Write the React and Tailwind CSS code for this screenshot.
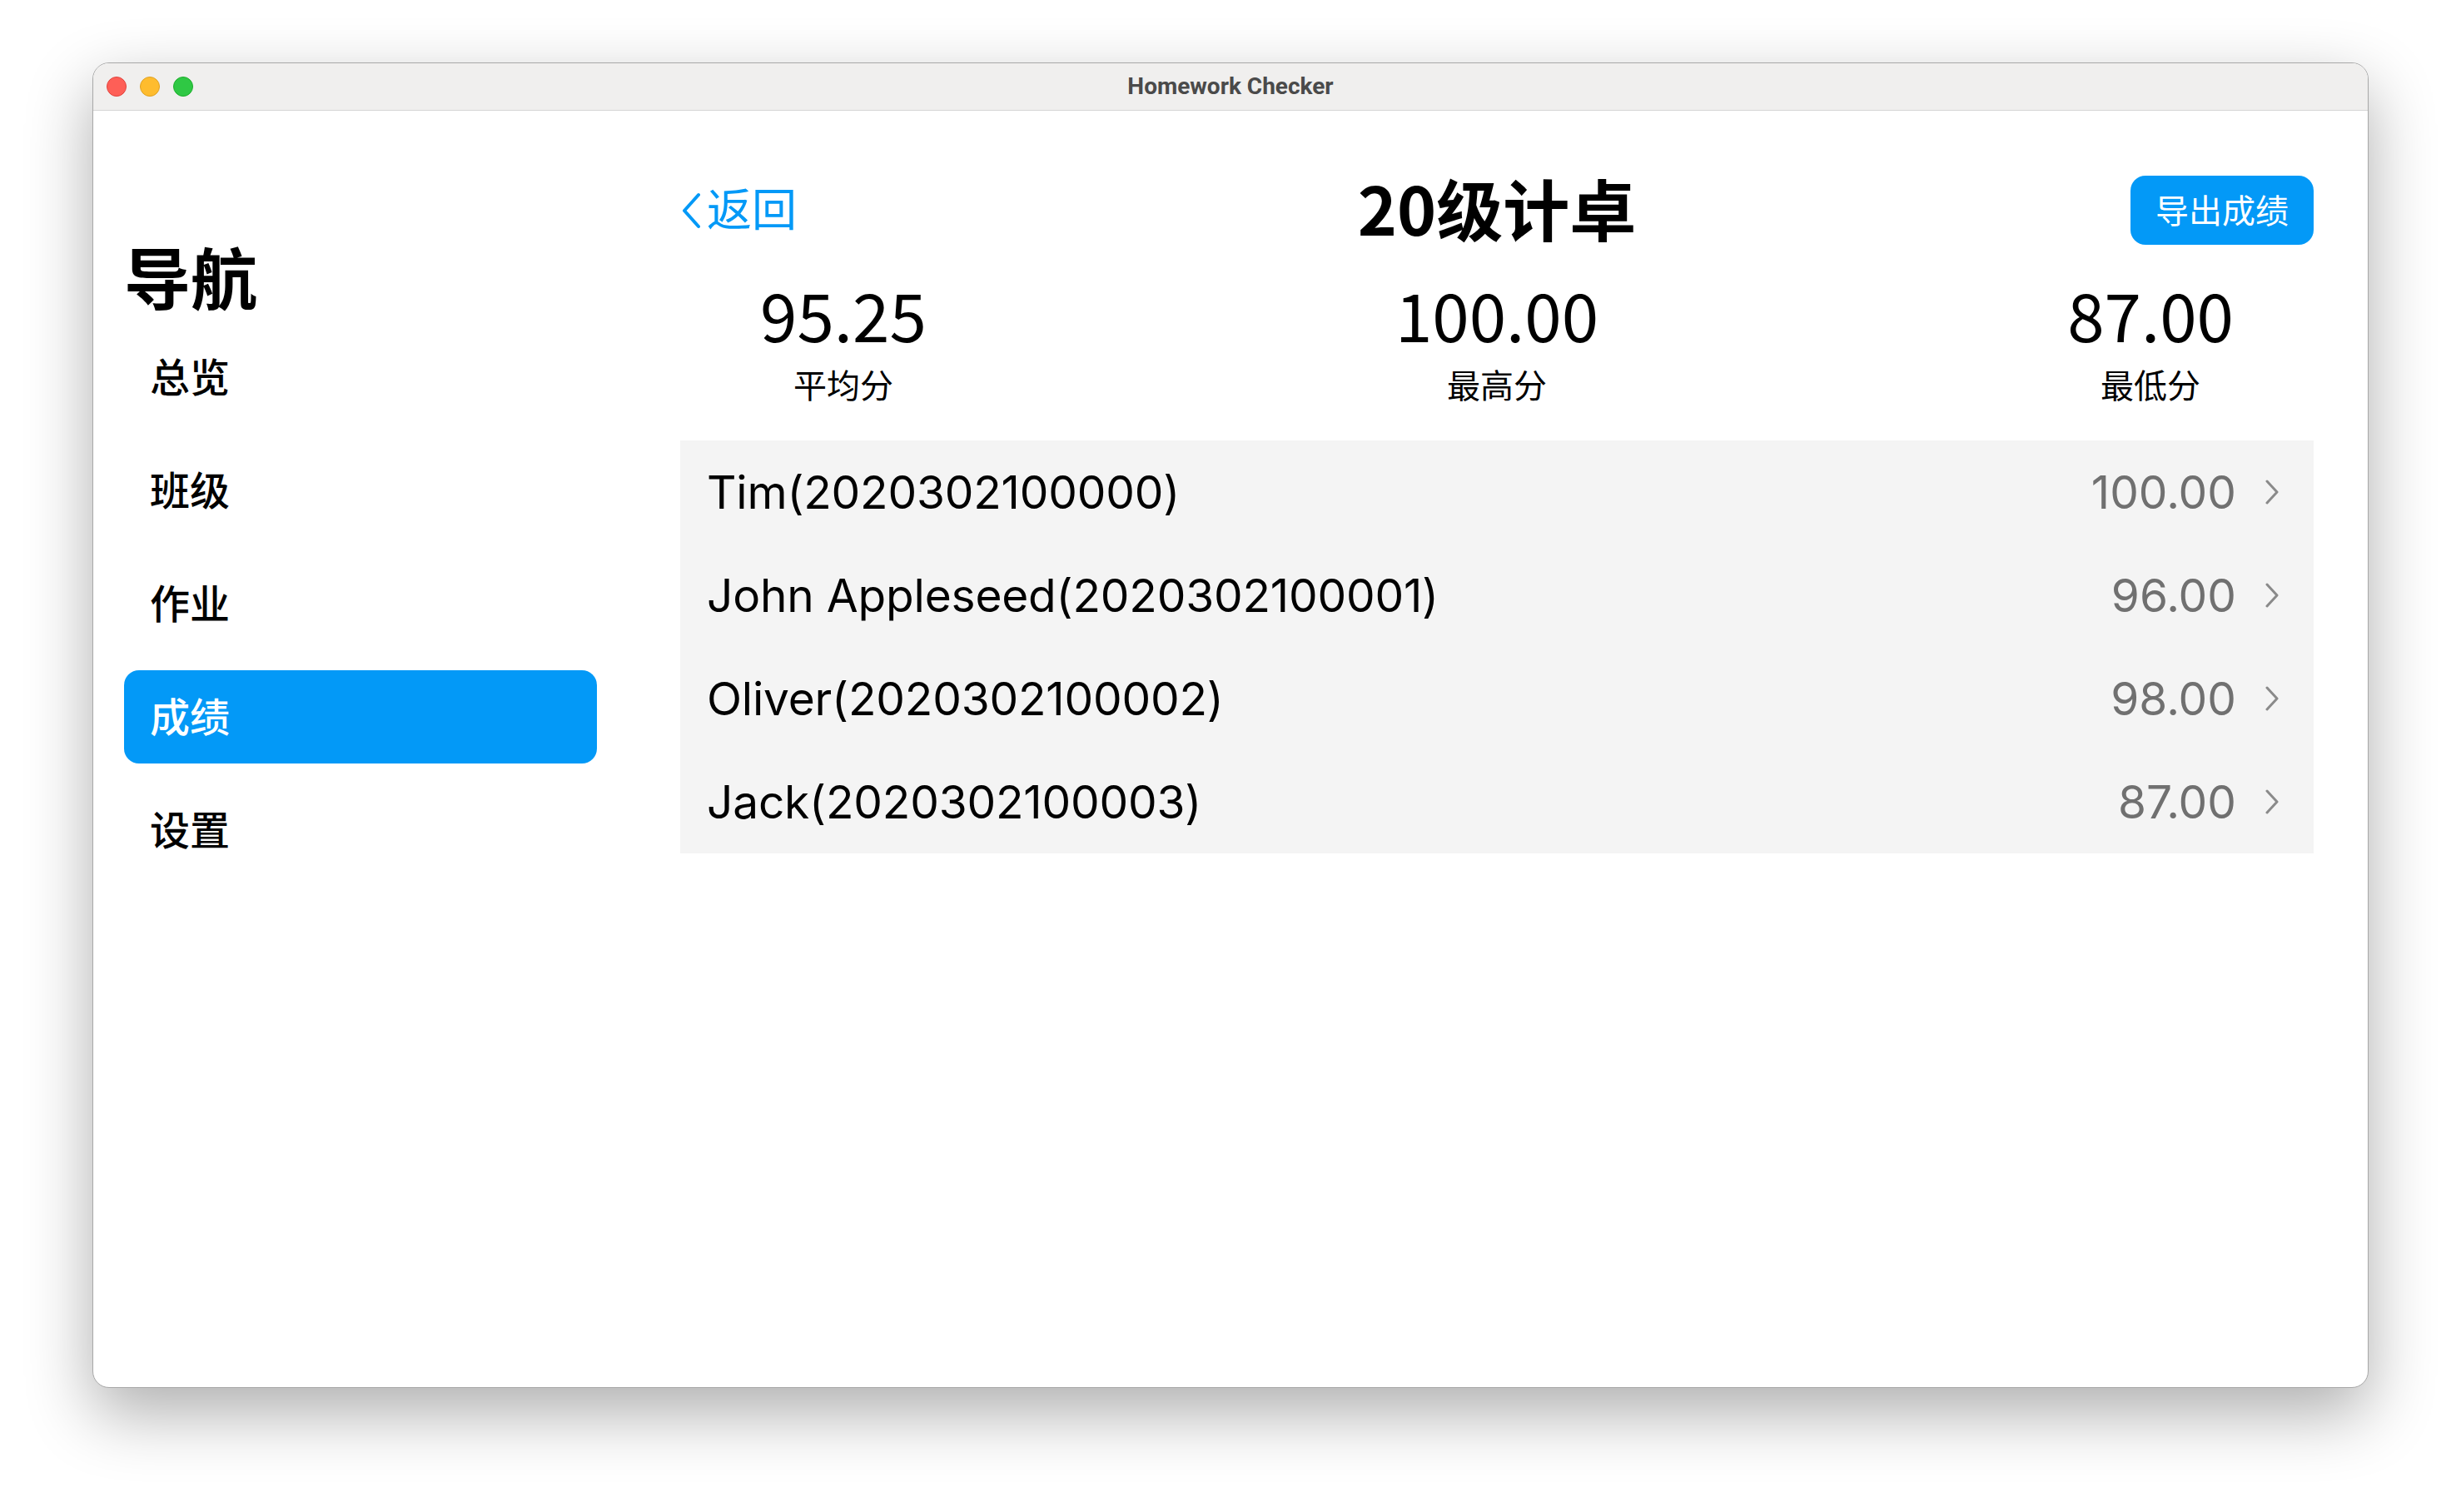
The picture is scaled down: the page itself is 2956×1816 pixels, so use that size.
const students = [
  { name: "Tim", id: "2020302100000", score: "100.00" },
  { name: "John Appleseed", id: "2020302100001", score: "96.00" },
  { name: "Oliver", id: "2020302100002", score: "98.00" },
  { name: "Jack", id: "2020302100003", score: "87.00" },
];

const stats = [
  { value: "95.25", label: "平均分" },
  { value: "100.00", label: "最高分" },
  { value: "87.00", label: "最低分" },
];

const navItems = ["总览", "班级", "作业", "成绩", "设置"];

const cjk = { fontFamily: '"Noto Sans CJK SC", "Noto Sans", sans-serif' };
const latin = { fontFamily: 'Inter, "Noto Sans CJK SC", sans-serif' };

function Chevron() {
  return (
    <svg width="18" height="30" viewBox="0 0 18 30" fill="none">
      <path
        d="M3 2l12 13-12 13"
        stroke="#8a8a8a"
        strokeWidth="3"
        strokeLinecap="round"
        strokeLinejoin="round"
      />
    </svg>
  );
}

function App() {
  return (
    <div className="w-[2956px] h-[1816px] bg-white pt-[75px] pl-[111px]">
      <div className="w-[2734px] h-[1592px] rounded-[20px] overflow-hidden bg-white border border-[#a8a8a8] shadow-[0_30px_80px_rgba(0,0,0,0.32)] flex flex-col">
        <div className="relative h-[57px] shrink-0 bg-[#f0efee] border-b border-[#d5d5d5] flex items-center pl-[16px]">
          <div className="flex gap-[16px]">
            <div className="w-[24px] h-[24px] rounded-full bg-[#fe5f57] border border-[#e0443e]"></div>
            <div className="w-[24px] h-[24px] rounded-full bg-[#febc2e] border border-[#dea123]"></div>
            <div className="w-[24px] h-[24px] rounded-full bg-[#2fc844] border border-[#1dad2b]"></div>
          </div>
          <div
            className="absolute inset-0 flex items-center justify-center text-[28px] font-bold text-[#4a4a4a]"
            style={{ fontFamily: 'Roboto, "Liberation Sans", sans-serif' }}
          >
            Homework Checker
          </div>
        </div>
        <div className="flex flex-1">
          <div className="w-[640px] shrink-0 pl-[37px] pr-[35px] pt-[149px]" style={cjk}>
            <div className="h-[96px] leading-[96px] text-[80px] font-semibold text-black">
              导航
            </div>
            <div className="mt-[19px] flex flex-col gap-[24px]">
              {navItems.map((item) => (
                <div
                  key={item}
                  className={
                    item === "成绩"
                      ? "h-[112px] flex items-center px-[31px] pb-[6px] rounded-[18px] bg-[#0399f7] text-white text-[48px] font-medium"
                      : "h-[112px] flex items-center px-[31px] pb-[6px] rounded-[18px] text-black text-[48px] font-medium"
                  }
                >
                  {item}
                </div>
              ))}
            </div>
          </div>
          <div className="flex-1 pl-[65px] pr-[65px] pt-[78px]">
            <div className="grid grid-cols-[1fr_auto_1fr] grid-rows-[83px] items-center">
              <div className="flex items-center gap-[6px] text-[#0399f7]" style={cjk}>
                <svg width="26" height="44" viewBox="0 0 26 44" fill="none">
                  <path
                    d="M22 3L5 22l17 19"
                    stroke="#0399f7"
                    strokeWidth="4"
                    strokeLinecap="round"
                    strokeLinejoin="round"
                  />
                </svg>
                <span className="text-[54px] leading-none pb-[8px]">返回</span>
              </div>
              <div className="text-[80px] font-semibold text-black leading-none pb-[10px]" style={cjk}>
                20级计卓
              </div>
              <div className="flex justify-end">
                <div
                  className="w-[220px] h-[83px] rounded-[18px] bg-[#0399f7] text-white text-[40px] flex items-center justify-center pb-[4px]"
                  style={cjk}
                >
                  导出成绩
                </div>
              </div>
            </div>
            <div className="mt-[37px] px-[96px] flex justify-between" style={cjk}>
              {stats.map((s) => (
                <div key={s.label} className="flex flex-col items-center">
                  <div className="text-[80px] leading-[90px] text-black">{s.value}</div>
                  <div className="mt-[16px] text-[40px] leading-[48px] text-black">{s.label}</div>
                </div>
              ))}
            </div>
            <div className="mt-[44px] bg-[#f4f4f4]" style={latin}>
              {students.map((st) => (
                <div key={st.id} className="h-[124px] flex items-center pl-[32px] pr-[41px]">
                  <div className="flex-1 text-[55px] text-black tracking-[-0.2px]">
                    {st.name}({st.id})
                  </div>
                  <div className="text-[55px] text-[#707070]">{st.score}</div>
                  <div className="ml-[34px] flex items-center">
                    <Chevron />
                  </div>
                </div>
              ))}
            </div>
          </div>
        </div>
      </div>
    </div>
  );
}

export default App;
